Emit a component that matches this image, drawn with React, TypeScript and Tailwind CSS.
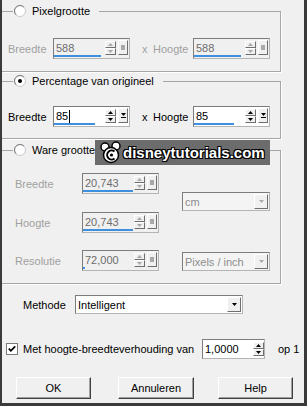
import React from "react";

// classic Windows bevels
const raised =
  "border border-t-white border-l-white border-r-[#6e6e6e] border-b-[#6e6e6e] bg-[#f0f0f0]";
const frame = "border border-[#b4b4b4] border-t-[#7c7c7c] border-l-[#7c7c7c]";

function Radio({ checked }: { checked?: boolean }) {
  return (
    <svg width="12" height="12" viewBox="0 0 12 12" className="shrink-0">
      <circle cx="6" cy="6" r="5.5" fill="#fff" stroke="#c8c8c8" />
      <path d="M2.1 9.9 A5.5 5.5 0 0 1 9.9 2.1" stroke="#7a7a7a" fill="none" />
      {checked && <circle cx="6" cy="6" r="2" fill="#000" />}
    </svg>
  );
}

function Check() {
  return (
    <svg width="12" height="12" viewBox="0 0 12 12" className="shrink-0">
      <rect x="0.5" y="0.5" width="11" height="11" fill="#fff" stroke="#7a7a7a" />
      <path d="M2.8 5.6 L4.9 7.8 L9.2 3.4" stroke="#000" strokeWidth="1.8" fill="none" />
    </svg>
  );
}

function Tri({ up, color }: { up?: boolean; color: string }) {
  return (
    <svg width="5" height="3" viewBox="0 0 5 3">
      <path d={up ? "M0 3 L2.5 0 L5 3 Z" : "M0 0 L5 0 L2.5 3 Z"} fill={color} />
    </svg>
  );
}

function Spinner({ disabled }: { disabled?: boolean }) {
  const c = disabled ? "#a8a8a8" : "#000";
  return (
    <div className="mt-[2px] flex w-[11px] flex-col">
      <div className={`${raised} flex h-[7px] items-center justify-center`}>
        <Tri up color={c} />
      </div>
      <div className={`${raised} flex h-[7px] items-center justify-center`}>
        <Tri color={c} />
      </div>
    </div>
  );
}

function MoreBtn({ disabled }: { disabled?: boolean }) {
  return (
    <div className={`${raised} mt-[1px] ml-[2px] flex h-[15px] w-[10px] flex-col items-center justify-center`}>
      {disabled ? (
        <div className="h-[5px] w-[4px] bg-[#a8a8a8]" />
      ) : (
        <>
          <Tri color="#000" />
          <div className="mt-[1px] h-px w-[5px] bg-black" />
        </>
      )}
    </div>
  );
}

function SpinField({
  value,
  disabled,
  bar,
  caret,
}: {
  value: string;
  disabled?: boolean;
  bar: string;
  caret?: boolean;
}) {
  return (
    <div className={`${frame} flex h-[21px] w-[77px] shrink-0 ${disabled ? "bg-[#f0f0f0]" : "bg-white"}`}>
      <div className="flex w-[51px] flex-col">
        <div className={`flex items-center pt-[2px] pl-[2px] text-[11px] leading-[14px] ${disabled ? "text-[#6d6d6d]" : "text-black"}`}>
          {value}
          {caret && <span className="ml-px h-[13px] w-px bg-black" />}
        </div>
        <div className={`mt-auto mb-px h-[2px] bg-[#3f8fdf] ${bar}`} />
      </div>
      <Spinner disabled={disabled} />
      <MoreBtn disabled={disabled} />
    </div>
  );
}

function Select({ value, disabled, width }: { value: string; disabled?: boolean; width: string }) {
  return (
    <div className={`${frame} flex h-[19px] items-center ${width} ${disabled ? "bg-[#f4f4f4] text-[#8c8c8c]" : "bg-white text-black"}`}>
      <span className="flex-1 pl-[2px] text-[11px] leading-[14px]">{value}</span>
      <div className={`${raised} mr-px flex h-[15px] w-[14px] items-center justify-center`}>
        <Tri color={disabled ? "#a8a8a8" : "#000"} />
      </div>
    </div>
  );
}

function Group({
  label,
  checked,
  className,
  children,
}: {
  label: string;
  checked?: boolean;
  className: string;
  children: React.ReactNode;
}) {
  return (
    <fieldset className={`w-[279px] border border-l-0 border-[#a6a6a6] p-0 shadow-[1px_1px_0_#ffffff] ${className}`}>
      <legend className="ml-[11px] pr-[9px] pl-px">
        <span className="flex h-[14px] items-center">
          <Radio checked={checked} />
          <span className="ml-[6px] leading-[14px]">{label}</span>
        </span>
      </legend>
      {children}
    </fieldset>
  );
}

function Button({ label, className }: { label: string; className: string }) {
  return (
    <div
      className={`flex h-[22px] items-center justify-center border border-t-white border-l-white border-r-[#404040] border-b-[#404040] shadow-[inset_-1px_-1px_0_#a0a0a0] ${className}`}
    >
      {label}
    </div>
  );
}

export default function App() {
  return (
    <div className="relative flex h-[406px] w-[307px] flex-col border-b-[3px] border-l-[2px] border-r-[3px] border-[#3a3a3a] bg-[#f0f0f0] pt-[4px] font-['Liberation_Sans',Arial,sans-serif] text-[11px] leading-[14px] text-black">
      {/* Pixelgrootte */}
      <Group label="Pixelgrootte" className="">
        <div className="mt-[20px] mb-[12px] flex items-center pl-[6px] text-[#a0a0a0]">
          <span className="w-[45px]">Breedte</span>
          <SpinField value="588" disabled bar="w-[47px]" />
          <span className="ml-[12px] w-[6px]">x</span>
          <span className="ml-[5px] w-[40px]">Hoogte</span>
          <SpinField value="588" disabled bar="w-[47px]" />
        </div>
      </Group>

      {/* Percentage */}
      <Group label="Percentage van origineel" checked className="mt-[2px]">
        <div className="mt-[18px] mb-[11px] flex items-center pl-[6px]">
          <span className="w-[45px]">Breedte</span>
          <SpinField value="85" caret bar="w-[41px]" />
          <span className="ml-[12px] w-[6px]">x</span>
          <span className="ml-[5px] w-[40px]">Hoogte</span>
          <SpinField value="85" bar="w-[40px]" />
        </div>
      </Group>

      {/* Ware grootte */}
      <Group label="Ware grootte" className="mt-[4px]">
        <div className="mt-[16px] mb-[12px] flex">
          <div className="flex flex-col gap-[18px] pl-[13px] text-[#a0a0a0]">
            <div className="flex items-center">
              <span className="w-[67px]">Breedte</span>
              <SpinField value="20,743" disabled bar="w-[50px]" />
            </div>
            <div className="flex items-center">
              <span className="w-[67px]">Hoogte</span>
              <SpinField value="20,743" disabled bar="w-[50px]" />
            </div>
            <div className="-mt-px flex items-center">
              <span className="w-[67px]">Resolutie</span>
              <SpinField value="72,000" disabled bar="w-[2px]" />
            </div>
          </div>
          <div className="ml-[23px] flex flex-col gap-[41px] pt-[19px]">
            <Select value="cm" disabled width="w-[88px]" />
            <Select value="Pixels / inch" disabled width="w-[88px]" />
          </div>
        </div>
      </Group>

      {/* Methode */}
      <div className="mt-[11px] flex items-center pl-[21px]">
        <span className="w-[52px]">Methode</span>
        <Select value="Intelligent" width="w-[168px]" />
      </div>

      {/* Verhouding */}
      <div className="mt-[25px] flex items-center pl-[4px]">
        <Check />
        <span className="ml-[5px] w-[179px] whitespace-nowrap">Met hoogte-breedteverhouding van</span>
        <div className={`${frame} flex h-[20px] w-[63px] bg-white`}>
          <span className="flex-1 pt-[2px] pl-[2px]">1,0000</span>
          <Spinner />
        </div>
        <span className="ml-[13px]">op 1</span>
      </div>

      {/* Buttons */}
      <div className="mt-[18px] flex pl-[14px]">
        <Button label="OK" className="w-[75px]" />
        <Button label="Annuleren" className="ml-[27px] w-[76px]" />
        <Button label="Help" className="ml-[24px] w-[75px]" />
      </div>

      {/* watermark */}
      <div className="absolute top-[140px] left-[93px] flex h-[25px] w-[175px] items-center bg-[#6c6c6c]">
        <svg width="22" height="24" viewBox="0 0 22 24" className="ml-[5px]">
          <circle cx="5" cy="6" r="4" fill="#fff" stroke="#000" strokeWidth="1.5" />
          <circle cx="16" cy="5" r="4" fill="#fff" stroke="#000" strokeWidth="1.5" />
          <circle cx="11" cy="14" r="7.5" fill="#fff" stroke="#000" strokeWidth="1.5" />
          <path d="M14.5 10.5 A4.5 4.5 0 1 0 14.5 17.5" stroke="#000" strokeWidth="2" fill="none" />
          <circle cx="11.5" cy="14" r="1.6" fill="#000" />
        </svg>
        <span className="ml-[1px] font-bold text-[15px] leading-[18px] text-white [text-shadow:-1px_-1px_0_#000,1px_-1px_0_#000,-1px_1px_0_#000,1px_1px_0_#000]">
          disneytutorials.com
        </span>
      </div>
    </div>
  );
}
